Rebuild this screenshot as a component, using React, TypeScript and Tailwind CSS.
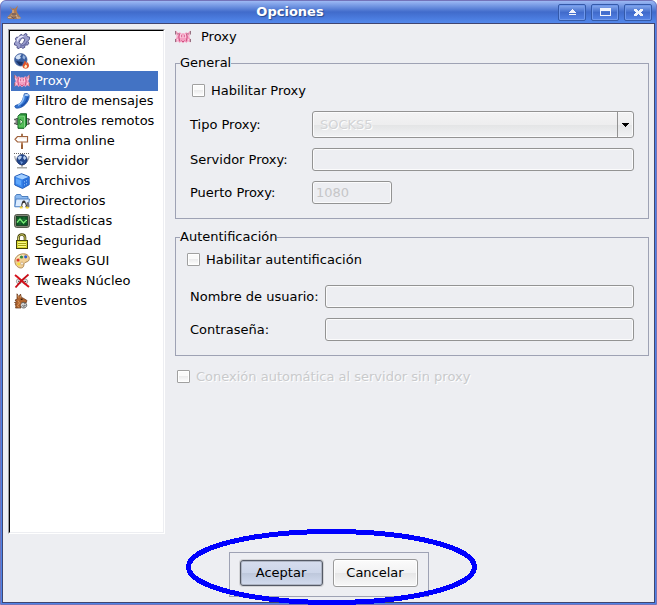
import React, { useState } from "react";
import type { ReactNode } from "react";

function Icon({ children }: { children: ReactNode }) {
  return (
    <svg width="16" height="16" viewBox="0 0 16 16" className="shrink-0" aria-hidden="true">
      {children}
    </svg>
  );
}

const GearIcon = () => (
  <Icon>
    <path
      d="M6.500 1.700l1.300-.3.700 1.200 1.600-.6.900-1.400 2 .5-.2 1.700 1 1 1.700.2.200 2.200-1.400.9-.3 1.600.8 1.500-1.300 1.900-1.600-.2-1.200 1 .1 1.500-2.200 1-1-1.200-1.600.2-1 1.200-2-.7.1-1.700-1-1-1.500-.2L.4 9.900l1.400-1 .3-1.600-.8-1.400 1.300-1.800 1.600.2 1.200-1.100z"
      fill="#9c9fce"
      stroke="#4a4c84"
      strokeWidth=".9"
    />
    <path d="M3.300 8.500C3.500 5.500 6 3.500 9.500 3.300" stroke="#e9eafb" strokeWidth="1.600" fill="none" />
    <path d="M6 12.800c3 .3 6-1.300 7-4.500" stroke="#6c6fa8" strokeWidth="1.200" fill="none" />
    <ellipse cx="8" cy="8.100" rx="2" ry="3.500" transform="rotate(35 8 8)" fill="#fff" stroke="#4c4e86" strokeWidth=".9" />
  </Icon>
);

const GlobeFlameIcon = () => (
  <Icon>
    <circle cx="6.800" cy="6.800" r="6.200" fill="#3b5fa0" stroke="#4a66a0" strokeWidth=".8" />
    <path d="M1.500 4.500C3 1.500 6 .8 7.500 1.500L6 3.500l1 1.500-2.500 1.500L2.500 6z" fill="#d4e2f5" />
    <path d="M9 2l2.500 2-1 2.500-2-1.500z" fill="#96b3de" />
    <path d="M2 8l3 .5 4 .5-1 3.200-2.500.3z" fill="#1b3468" />
    <path d="M10.500 8c2 .3 2 1.800 1.500 2.500.8-.3 1.200-1 1.300-1.600 1.200 1.300 2.200 3 1.500 4.800-.6 1.500-2.300 2.100-3.800 1.900-1.800-.3-2.700-1.600-2.400-3.200.2-1.500 1.800-2 1.900-4.400z" fill="#e0562c" />
    <path d="M11.500 11.500c1.500.6 2 1.800 1.300 2.800-.6.8-2 .8-2.500 0-.5-.9.800-1.500 1.200-2.800z" fill="#fff0c8" />
  </Icon>
);

const ProxyIcon = () => (
  <Icon>
    <path
      d="M.5 1.500L3.200 4 5 3.200 6.600 4.800 8 4l1.400.8L11 3.200l1.800.8 2.700-2.500-.4 4.500-.9 2 1.300 2v3.500L13 12.300 11.300 14 10 12.500l-2 1.800-2-1.800L4.700 14 3 12.300.5 13.500V10l1.300-2-.9-2z"
      fill="#f5a0c2"
    />
    <path d="M.6 2v3.500M15.400 2v3.500M.6 10v3M15.400 10v3M3.200 4.200L2.500 6M12.800 4.200l.7 1.800" stroke="#8d6677" strokeWidth="1" fill="none" />
    <path d="M4.600 4.500L3.800 8l1 4.500M11.400 4.500l.8 3.500-1 4.500M6.700 6v2M9.300 6v2M6.500 11.500L8 13l1.500-1.500" stroke="#c8487a" strokeWidth=".9" fill="none" />
    <path d="M2 5v2.500M14 5v2.500M5.700 5v4M10.300 5v4M8 6v3M2.500 10v1.500M13.500 10v1.500" stroke="#ffd7e6" strokeWidth=".9" />
  </Icon>
);

const FunnelIcon = () => (
  <Icon>
    <path d="M10.300.8c1.500-.8 4.200-.2 4.800 1.200.5 3-1 6.500-3.600 9.200-2 2.200-4.800 3.800-8 4-1.500 0-2.800-.7-2.700-1.800.2-1.200 2-1.300 3.200-1.800 2.500-1.200 3.700-3 4.800-5.600z" fill="#3475d2" stroke="#17479c" strokeWidth=".7" />
    <path d="M10 2.500c0 4-2 7.500-6 9.800" stroke="#8dbcf6" strokeWidth="1.500" fill="none" />
    <path d="M13.600 4c-.5 3.700-2.500 7-6.500 9" stroke="#1b50ac" strokeWidth="1.400" fill="none" />
    <ellipse cx="12.600" cy="1.900" rx="2.300" ry="1" fill="#b7d4fa" />
  </Icon>
);

const RemoteIcon = () => (
  <Icon>
    <path d="M0 6.500h3M0 10.500h3M13 6.500h3M13 10.500h3" stroke="#6d6d6d" strokeWidth="1.500" />
    <path d="M2 5.500h2v6H2zM12.500 5.500h2v6h-2z" fill="#a2a2a2" stroke="#444" strokeWidth=".7" />
    <path d="M4 3L6.500.8h6V12.500L10 15.300H4z" fill="#319b3d" stroke="#0f5f20" strokeWidth="1" />
    <path d="M4.500 3.300h5.800v11.500" stroke="#9be29e" strokeWidth="1" fill="none" />
    <path d="M4.500 3.500h5v11h-5z" fill="#54bf58" />
    <path d="M6 6v5.500l3-2.800z" fill="#eaffdf" stroke="#11611f" strokeWidth=".8" />
  </Icon>
);

const SignIcon = () => (
  <Icon>
    <path d="M7 11h2v5H7z" fill="#9c5f35" />
    <path d="M7 .8h2v3H7z" fill="#a87650" />
    <path d="M3.500 3.500h10v5.500h-10L1 6.300z" fill="#fff" stroke="#a0623c" strokeWidth="1.200" />
    <path d="M4.500 4.800h8" stroke="#e5d2c5" strokeWidth=".8" />
    <path d="M7 9h2v2.500H7z" fill="#b98460" />
  </Icon>
);

const ServerIcon = () => (
  <Icon>
    <path d="M0 .5h16" stroke="#666" strokeWidth="1" strokeDasharray="1 1" />
    <path d="M.8 3c0 3.500 1.700 5.500 4 6.500M15 3c0 3.500-1.700 5.500-4 6.500" stroke="#9c9fa8" strokeWidth="1.200" fill="none" />
    <circle cx="8" cy="6.700" r="5.200" fill="#23488e" stroke="#132a60" strokeWidth=".7" />
    <path d="M3.500 4.500L6 2.500l2 1-1 2-2 1.500zM10 2.500l2.500 2.500-2 2-1.500-2z" fill="#b9d0f0" />
    <path d="M6 8l3 1-1.500 2.500z" fill="#739cda" />
    <path d="M7 12h2v1.500H7z" fill="#888" />
    <path d="M3 14h10v1.500H3z" fill="#a8a9a4" />
  </Icon>
);

const CubeIcon = () => (
  <Icon>
    <path d="M.8 3.500L7.500.7l7.700 3v8L8.500 15.500.8 12z" fill="#3d8bf0" stroke="#174fab" strokeWidth=".9" />
    <path d="M1.300 3.700L7.500 1.200l7 2.700-6 2.600z" fill="#a5d0ff" />
    <path d="M8.500 6.500l6.200-2.400v7.300l-6.200 3.500z" fill="#2a70da" />
    <path d="M2 5.500l5 2v5L2 10.500z" fill="#5fa7fb" />
    <path d="M10.500 8v1.500M12.500 7v1.500M10.500 11v1.500M12.500 10v1.500" stroke="#8dbefa" strokeWidth=".8" />
  </Icon>
);

const FolderIcon = () => (
  <Icon>
    <path d="M1 13.500v-10L2.500 1.500h4l1.300 2H14v10z" fill="#8cbaf0" stroke="#3f74b8" strokeWidth=".9" />
    <path d="M.8 13.800L2 6h13.500L14 13.800z" fill="#dcecff" stroke="#4379bf" strokeWidth=".9" />
    <path d="M7.500 14c-.6-3 .4-4 .8-5.500.4-1.300 2.600-1.300 3 0 .3 1.500 2.200 3 1.700 5.500z" fill="#333" />
    <ellipse cx="10" cy="12.300" rx="1.700" ry="2.500" fill="#fff" />
    <path d="M12.500 10c1-1.500 2-1 2.500.5.500 1.500.7 3 .2 4h-2z" fill="#74787f" />
    <path d="M5.500 14.200l2-1.200 1.500 2.300-2.800.3zM11.500 15.300l.8-2 2.700 1-.8 1.500z" fill="#f8d12c" />
  </Icon>
);

const StatsIcon = () => (
  <Icon>
    <rect x=".6" y="1.600" width="14.800" height="12.800" rx="2" fill="#8b8f80" stroke="#4a5043" />
    <rect x="2.500" y="3.500" width="11" height="9" fill="#0c5a24" stroke="#0b3316" strokeWidth=".7" />
    <path d="M3 6.500h10M3 9.500h10M6 4v8M10 4v8" stroke="#2b7a3c" strokeWidth=".6" />
    <path d="M3 9.500L6 6l3.500 4L12 7.500h1" stroke="#7cee78" strokeWidth="1.200" fill="none" />
  </Icon>
);

const LockIcon = () => (
  <Icon>
    <path d="M4.500 8V4.500C4.500.5 11 .5 11 4.500V8" fill="none" stroke="#4a4710" strokeWidth="2.600" />
    <path d="M4.500 8V4.500C4.500.8 11 .8 11 4.500V8" fill="none" stroke="#dcd86d" strokeWidth="1" />
    <rect x="2.500" y="7.500" width="11" height="8" fill="#d8d62e" stroke="#424009" />
    <path d="M4 9.500h8M4 11.500h8M4 13.500h8" stroke="#fbf986" strokeWidth="1" />
    <path d="M4 10.500h8M4 12.500h8" stroke="#96930f" strokeWidth=".8" />
  </Icon>
);

const PaletteIcon = () => (
  <Icon>
    <path d="M1 9.500C0 5 4 .8 9.500.8c4 0 6.300 2.700 5.700 5.700-.5 2.500-3 2.200-4.500 3.300-1.500 1.200 0 3-2 4.700C6.500 16 1.800 14 1 9.500z" fill="#f1cf94" stroke="#a9824c" strokeWidth=".9" />
    <path d="M2.500 8C3 4.500 6 2.300 9.500 2.200" stroke="#fff0c9" strokeWidth="1.200" fill="none" />
    <circle cx="4" cy="7" r="1.600" fill="#e0392b" />
    <circle cx="7.500" cy="4" r="1.600" fill="#318a42" />
    <circle cx="11.700" cy="3.800" r="1.600" fill="#2d5cd0" />
    <circle cx="4.700" cy="11" r="1.500" fill="#f5e33a" />
    <ellipse cx="8" cy="10.500" rx="1.200" ry="1.500" fill="#fff" stroke="#ad7e42" strokeWidth=".5" />
  </Icon>
);

const CoreIcon = () => (
  <Icon>
    <circle cx="5" cy="8.300" r="2.600" fill="#ededed" stroke="#8a8a8a" strokeWidth=".8" />
    <circle cx="11" cy="8.500" r="2.600" fill="#e2e2e2" stroke="#8a8a8a" strokeWidth=".8" />
    <path d="M10.500 8.500h1.500M4 8.300h1.500" stroke="#444" strokeWidth="1" />
    <path d="M1 2c4 3 9 8 14 12" stroke="#d7121c" strokeWidth="2" fill="none" />
    <path d="M14.500 1.500C10 5 5 10 1.500 14.500" stroke="#c90d17" strokeWidth="1.800" fill="none" />
  </Icon>
);

const DonkeyIcon = () => (
  <Icon>
    <path
      d="M3 .8l1.800 3L6.500 1l.8 3.200 2.500 1.300 3.200 2-1 2.500-4 .5-1.800 1.500.8 3H1.500c.8-1.500.3-2.500-.5-3.500L2.500 11 .5 9.500l2-.7L1 7l2-.7z"
      fill="#b0642e"
      stroke="#5e3015"
      strokeWidth=".7"
    />
    <path d="M3.800 2.500l.7 2M6.300 2.800v1.700M4 7.500l1.500 2.500-2 2.500 1.500 2" stroke="#d99a62" strokeWidth="1" fill="none" />
    <path d="M6.800 6.300h1.700" stroke="#23120a" strokeWidth="1.200" />
    <path d="M7 10.500c1-1.500 4.500-1.500 5.500.5.800 2-.5 3.800-2.500 4-2 .1-3-1-3-2" fill="#d2d2d2" stroke="#4f4f4f" strokeWidth=".8" />
    <path d="M8.500 12.500c1 1 2 1 3-.5M10.300 10.700h.8" stroke="#444" strokeWidth=".9" fill="none" />
  </Icon>
);

const WindowIcon = () => (
  <Icon>
    <path d="M3.500 2L6.500 5l1-1 1 1 3.500-3.500-1.500 5 1 3H5.500l1-3z" fill="#b57a4c" />
    <path d="M1 13.500l4-4.500h6.500l3.500 5-3 1H2.500z" fill="#a37c5c" />
    <path d="M2 13.500h3l1-2M10 11l1.500 3h3M7 6v3" stroke="#d3b397" strokeWidth="1.200" fill="none" />
    <path d="M5 12.500l3 2 2-2M6 10h4" stroke="#645260" strokeWidth="1" fill="none" />
  </Icon>
);

const sections = [
  { name: "General", icon: GearIcon },
  { name: "Conexión", icon: GlobeFlameIcon },
  { name: "Proxy", icon: ProxyIcon },
  { name: "Filtro de mensajes", icon: FunnelIcon },
  { name: "Controles remotos", icon: RemoteIcon },
  { name: "Firma online", icon: SignIcon },
  { name: "Servidor", icon: ServerIcon },
  { name: "Archivos", icon: CubeIcon },
  { name: "Directorios", icon: FolderIcon },
  { name: "Estadísticas", icon: StatsIcon },
  { name: "Seguridad", icon: LockIcon },
  { name: "Tweaks GUI", icon: PaletteIcon },
  { name: "Tweaks Núcleo", icon: CoreIcon },
  { name: "Eventos", icon: DonkeyIcon },
];

const fieldClass =
  "block h-[23px] rounded-[3px] border border-[#939393] bg-[#edeef2] px-[3px] text-[13px] text-[#c6c6c8] shadow-[inset_0_0_0_1px_#fbfbfc] outline-none";

function TitleButton({ label, children }: { label: string; children: ReactNode }) {
  return (
    <button
      type="button"
      aria-label={label}
      className="flex h-[17px] w-7 items-center justify-center rounded-[2px] border border-[#3459a8] bg-linear-to-b from-[#8aabee] via-[#416bcb] to-[#5584e8] shadow-[inset_0_0_0_1px_#6f98ec]"
    >
      <svg width="12" height="11" viewBox="0 0 12 11" shapeRendering="crispEdges" aria-hidden="true">
        {children}
      </svg>
    </button>
  );
}

function Check({ label, disabled = false }: { label: string; disabled?: boolean }) {
  return (
    <label
      className={
        disabled
          ? "flex h-4 w-fit items-start gap-1.5 text-[#c9cacc] [text-shadow:1px_1px_0_#fff]"
          : "flex h-4 w-fit items-start gap-1.5"
      }
    >
      <input
        type="checkbox"
        disabled={disabled}
        className="mt-px size-[13px] shrink-0 appearance-none rounded-[1px] border border-[#a0a0a0] bg-[linear-gradient(#fafafa_50%,#ececed_50%,#fff)] shadow-[inset_0_0_0_1px_#fff] checked:bg-[#4672c4]"
      />
      {label}
    </label>
  );
}

function Group({ title, children }: { title: string; children: ReactNode }) {
  return (
    <fieldset className="min-w-0 border border-[#9ea2b4]">
      <legend className="ml-1 h-4 leading-4">{title}</legend>
      {children}
    </fieldset>
  );
}

export default function App() {
  const [active, setActive] = useState("Proxy");

  return (
    <div className="flex min-h-screen flex-col rounded-t-[6px] border border-[#7373b9] bg-[#4d83e8] font-['DejaVu_Sans',sans-serif] text-[13px] leading-4 text-black">
      <header className="flex h-[22px] items-center rounded-t-[5px] bg-linear-to-b from-[#9db9f4] via-[#416bcb] to-[#5288ec] pr-1 pl-[5px]">
        <WindowIcon />
        <h1 className="flex-1 text-center font-bold text-white [text-shadow:1px_1px_1px_#29498e]">Opciones</h1>
        <div className="flex gap-[5px]">
          <TitleButton label="Plegar">
            <path d="M6 2h1v1h1v1h1v1h1v1H3V5h1V4h1V3h1zM3 7h7v1H3z" fill="#f1f4fc" />
          </TitleButton>
          <TitleButton label="Maximizar">
            <path d="M1 1h11v8H1zM2 4v4h9V4z" fillRule="evenodd" fill="#f1f4fc" />
          </TitleButton>
          <TitleButton label="Cerrar">
            <path d="M2 2h3v1h1v1h1V3h1V2h3v2h-1v1H9v1h1v1h1v2H8V8H7V7H6v1H5v1H2V7h1V6h1V5H3V4H2z" fill="#f1f4fc" />
          </TitleButton>
        </div>
      </header>

      <form
        className="mx-px mb-px flex flex-1 flex-col border border-[#404570] bg-[#edeef2] px-[5px] pt-[5px] pb-[5px]"
        onSubmit={(event) => event.preventDefault()}
      >
        <div className="flex flex-1 gap-2.5">
          <nav
            aria-label="Secciones"
            className="w-[157px] shrink-0 border border-t-[#9b9ca3] border-r-white border-b-white border-l-[#9b9ca3]"
          >
            <ul className="h-full border border-t-black border-r-[#edeef2] border-b-[#edeef2] border-l-black bg-white pr-[5px] pl-px">
              {sections.map(({ name, icon: SectionIcon }) => (
                <li key={name}>
                  <button
                    type="button"
                    aria-current={name === active ? "page" : undefined}
                    onClick={() => setActive(name)}
                    className={
                      name === active
                        ? "flex h-5 w-full items-center gap-[5px] bg-[#4373c4] pl-[3px] text-left whitespace-nowrap text-white"
                        : "flex h-5 w-full items-center gap-[5px] pl-[3px] text-left whitespace-nowrap"
                    }
                  >
                    <SectionIcon />
                    {name}
                  </button>
                </li>
              ))}
            </ul>
          </nav>

          <main className="min-w-0 flex-1">
            <h2 className="flex h-[26px] items-start gap-2.5">
              <ProxyIcon />
              Proxy
            </h2>

            <Group title="General">
              <div className="px-3.5 pt-3 pb-3.5">
                <div className="pl-0.5">
                  <Check label="Habilitar Proxy" />
                </div>
                <div className="mt-3 grid grid-cols-[122px_1fr] items-center gap-y-2.5">
                  <label htmlFor="proxy-type">Tipo Proxy:</label>
                  <div className="relative">
                    <select
                      id="proxy-type"
                      disabled
                      className="block h-[27px] w-full appearance-none rounded-[3px] border border-[#939393] bg-[linear-gradient(#f3f3f4,#eeeeef_50%,#e3e4e5_50%,#f1f2f4)] px-[7px] text-[13px] text-[#d3d4d6] opacity-100 shadow-[inset_0_0_0_1px_#fbfbfc] [text-shadow:1px_1px_0_#fff]"
                    >
                      <option>SOCKS5</option>
                    </select>
                    <span className="pointer-events-none absolute inset-y-px right-px flex w-4 items-center justify-center border-l border-[#939393]">
                      <svg width="7" height="4" viewBox="0 0 7 4" aria-hidden="true" shapeRendering="crispEdges">
                        <path d="M0 0h7v1H6v1H5v1H4v1H3V3H2V2H1V1H0z" />
                      </svg>
                    </span>
                  </div>
                  <label htmlFor="proxy-host">Servidor Proxy:</label>
                  <input id="proxy-host" type="text" disabled className={`${fieldClass} w-full`} />
                  <label htmlFor="proxy-port">Puerto Proxy:</label>
                  <input id="proxy-port" type="text" disabled defaultValue="1080" className={`${fieldClass} w-20`} />
                </div>
              </div>
            </Group>

            <div className="pt-2.5">
              <Group title="Autentificación">
                <div className="px-3.5 pt-[7px] pb-3.5">
                  <div className="-ml-[3px]">
                    <Check label="Habilitar autentificación" />
                  </div>
                  <div className="mt-[17px] grid grid-cols-[135px_1fr] items-center gap-y-2.5">
                    <label htmlFor="proxy-user">Nombre de usuario:</label>
                    <input id="proxy-user" type="text" disabled className={`${fieldClass} w-full`} />
                    <label htmlFor="proxy-pass">Contraseña:</label>
                    <input id="proxy-pass" type="password" disabled className={`${fieldClass} w-full`} />
                  </div>
                </div>
              </Group>
            </div>

            <div className="pt-[13px] pl-0.5">
              <Check label="Conexión automática al servidor sin proxy" disabled />
            </div>
          </main>
        </div>

        <footer className="relative mt-[18px] flex w-fit items-center gap-2.5 self-center border border-[#9ea2b4] px-2.5 pt-1.5 pb-[9px]">
          <button
            type="submit"
            className="h-[26px] w-[83px] rounded-[3px] border border-[#555a66] bg-[linear-gradient(#d6ddee,#ccd5e8_50%,#bdc7db_50%,#d3dcef)] shadow-[inset_0_0_0_1px_#aeb5c4,0_0_0_1px_#d2d3d6]"
          >
            Aceptar
          </button>
          <button
            type="button"
            className="h-7 w-[85px] rounded-[3px] border border-[#9a9a9a] bg-[linear-gradient(#fbfbfb,#f2f2f3_50%,#e6e6e7_50%,#f8f8f8)] shadow-[inset_0_0_0_1px_#fff]"
          >
            Cancelar
          </button>
          <svg
            width="291"
            height="76"
            viewBox="0 0 291 76"
            shapeRendering="crispEdges"
            aria-hidden="true"
            className="pointer-events-none absolute -top-6 -left-11 max-w-none"
          >
            <ellipse cx="145.500" cy="38" rx="143" ry="35.500" fill="none" stroke="#0000fe" strokeWidth="5" />
          </svg>
        </footer>
      </form>
    </div>
  );
}
